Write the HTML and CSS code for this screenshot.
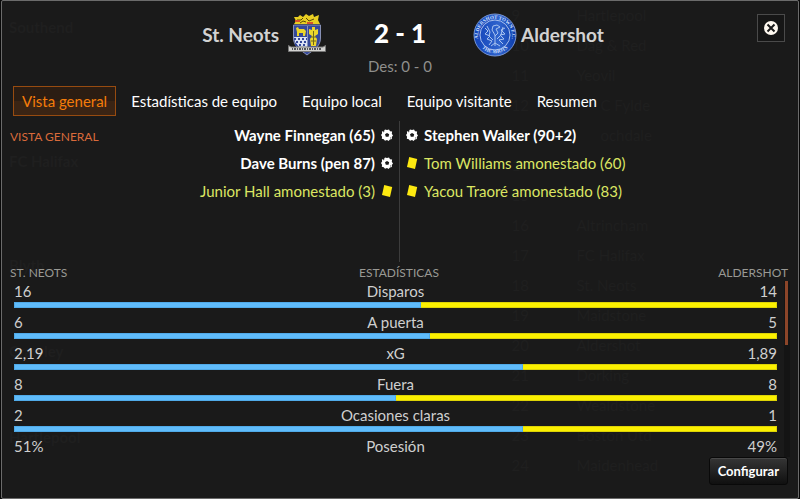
FILE: index.html
```html
<!DOCTYPE html>
<html lang="es">
<head>
<meta charset="utf-8">
<meta name="viewport" content="width=device-width, initial-scale=1">
<title>St. Neots 2 - 1 Aldershot</title>
<link rel="stylesheet" href="styles.css">
</head>
<body>
<svg class="defs" aria-hidden="true">
  <symbol id="ball" viewBox="0 0 12 12">
    <path fill="#fff" d="M4 .4 6 1 8 .4l1 1.8 2.100.4-.3 2.200L12 6.400l-1.200 1.700.2 2-2.100.3L7.600 12 6 11l-2 .8-1.200-1.600-2-.4.3-2.100L0 6l1.100-1.600-.2-2 2.100-.3z"/>
    <path fill="#1a1a1a" d="M6 4 8.200 5.300 7.500 7.700H4.800L4 5.300zM2 2.200h1.600l-1.200 1.200zM9 9.300l1.400.2-.8-1.200z"/>
  </symbol>
  <symbol id="card" viewBox="0 0 12 12">
    <path fill="#fde910" d="M3.200 0 11.200 2 9 12 1 10z"/>
  </symbol>
</svg>

<main class="panel">
  <div class="backdrop" aria-hidden="true">
    <div class="ghost-names">
      <b>Southend</b><b>FC Halifax</b><b>Blyth</b><b>Crawley</b><b>Hartlepool</b>
    </div>
    <div class="ghost-table">
      <span>9</span><span>Hartlepool</span>
      <span>10</span><span>Dag &amp; Red</span>
      <span>11</span><span>Yeovil</span>
      <span>12</span><span class="indent">C Fylde</span>
      <span>13</span><span class="indent">ochdale</span>
      <span>14</span><span></span>
      <span>15</span><span></span>
      <span>16</span><span>Altrincham</span>
      <span>17</span><span>FC Halifax</span>
      <span>18</span><span>St. Neots</span>
      <span>19</span><span>Maidstone</span>
      <span>20</span><span>Aldershot</span>
      <span>21</span><span>Dorking</span>
      <span>22</span><span>Wealdstone</span>
      <span>23</span><span>Boston Utd</span>
      <span>24</span><span>Maidenhead</span>
    </div>
  </div>

  <header class="scoreboard">
    <div class="team home">
      <h2>St. Neots</h2>
      <svg class="crest" viewBox="0 0 44 44" role="img" aria-label="Escudo de St. Neots">
        <path fill="#e9cf22" d="M9 4 13 4 15 2 18 4 21 1 24 3 28 1 29 4 34 2 33 7 35 11H9L11 8z"/>
        <path fill="none" stroke="#57480a" d="M12 7h4l2-2M21 5l3 3 5-2M15 10l3-2 3 1"/>
        <path fill="none" stroke="#d5522b" stroke-width="2" d="M10 8h5M22 10h6"/>
        <path fill="#35489a" stroke="#8790b5" d="M8.500 12H35.500V25C35.500 34 28 37 22 42 16 37 8.500 34 8.500 25z"/>
        <path fill="#dce2f4" d="M9 24h13v15l-8-5-4-5z"/>
        <path fill="none" stroke="#35489a" stroke-width="2" stroke-dasharray="2 2" d="M9 26h13M11 29h11M10 32h12M14 35h8"/>
        <path fill="#edd62b" d="M11 15l2-1 1 2h5l2 2-1 5h-2v-3h-4v3h-2v-4z"/>
        <path fill="#edd62b" d="M27 14h3v3l3-1v5l-3 2 2 3-1 7h-5l-1-7 2-3-3-2v-5l3 1z"/>
        <path stroke="#6d671c" d="M28.500 18v14M26 24h5M26 28h5"/>
        <path stroke="#8791bd" d="M22.500 13v25"/>
        <path fill="#d2d2d0" stroke="#777" d="M3.500 32.500 6 34H38L40.500 32.500V38.500H3.500z"/>
        <path stroke="#55565b" stroke-width="2" stroke-dasharray="1 1 2 1" d="M7 36h30"/>
      </svg>
    </div>
    <div class="result">
      <strong>2 - 1</strong>
      <span>Des: 0 - 0</span>
    </div>
    <div class="team away">
      <svg class="crest" viewBox="0 0 44 44" role="img" aria-label="Escudo de Aldershot">
        <defs>
          <linearGradient id="blue"><stop stop-color="#1142b8"/><stop offset=".6" stop-color="#3064cd"/><stop offset="1" stop-color="#0b3baa"/></linearGradient>
          <path id="arc-top" d="M5.500 27A17 17 0 1 1 38.500 27"/>
          <path id="arc-low" d="M6 31A18.500 18.500 0 0 0 38 31"/>
        </defs>
        <circle cx="22" cy="22" r="21" fill="url(#blue)" stroke="#7795d2"/>
        <circle cx="22" cy="22" r="15" fill="none" stroke="#a9c0ed"/>
        <text class="crest-text"><textPath href="#arc-top" startOffset="50%">ALDERSHOT TOWN F.C.</textPath></text>
        <text class="crest-text"><textPath href="#arc-low" startOffset="50%">THE SHOTS</textPath></text>
        <path fill="none" stroke="#a9c3ef" d="M22 33V22l-3-5 1-4 4-1 3 2-4 2 2 4-3 3M12 15l3 3-3 3 5 2-3 3 5 2-3 4M32 15l-4 2 4 4-5 1 4 4-5 1 4 4M14 13l3 6-1 4 4 4M30 14l-2 8-4 4M18 33l4-3 5 3"/>
      </svg>
      <h2>Aldershot</h2>
    </div>
    <button class="close" type="button" aria-label="Cerrar">
      <svg viewBox="0 0 14 14"><circle cx="7" cy="7" r="7" fill="#fff9f0"/><path d="M3.500 3.500l7 7M10.500 3.500l-7 7" stroke="#1a1a1a" stroke-width="2"/></svg>
    </button>
  </header>

  <nav class="tabs">
    <button class="tab active" type="button">Vista general</button>
    <button class="tab" type="button">Estadísticas de equipo</button>
    <button class="tab" type="button">Equipo local</button>
    <button class="tab" type="button">Equipo visitante</button>
    <button class="tab" type="button">Resumen</button>
  </nav>

  <section class="events">
    <h3>Vista general</h3>
    <ul class="home-events">
      <li class="goal">Wayne Finnegan (65)<svg><use href="#ball"/></svg></li>
      <li class="goal">Dave Burns (pen 87)<svg><use href="#ball"/></svg></li>
      <li class="booking">Junior Hall amonestado (3)<svg><use href="#card"/></svg></li>
    </ul>
    <ul class="away-events">
      <li class="goal"><svg><use href="#ball"/></svg>Stephen Walker (90+2)</li>
      <li class="booking"><svg><use href="#card"/></svg>Tom Williams amonestado (60)</li>
      <li class="booking"><svg><use href="#card"/></svg>Yacou Traoré amonestado (83)</li>
    </ul>
  </section>

  <section class="stats">
    <div class="stats-head"><span>St. Neots</span><h3>Estadísticas</h3><span>Aldershot</span></div>
    <div class="stats-body">
      <div class="rows">
        <div class="row"><span>16</span><span>Disparos</span><span>14</span></div>
        <div class="bar"><i style="width:53.3%"></i></div>
        <div class="row"><span>6</span><span>A puerta</span><span>5</span></div>
        <div class="bar"><i style="width:54.5%"></i></div>
        <div class="row"><span>2,19</span><span>xG</span><span>1,89</span></div>
        <div class="bar"><i style="width:66.7%"></i></div>
        <div class="row"><span>8</span><span>Fuera</span><span>8</span></div>
        <div class="bar"><i style="width:50%"></i></div>
        <div class="row"><span>2</span><span>Ocasiones claras</span><span>1</span></div>
        <div class="bar"><i style="width:66.7%"></i></div>
        <div class="row"><span>51%</span><span>Posesión</span><span>49%</span></div>
      </div>
      <div class="scroll"><div class="thumb"></div></div>
    </div>
  </section>

  <footer><button class="configure" type="button">Configurar</button></footer>
</main>
</body>
</html>
```
FILE: styles.css
```css
* { box-sizing: border-box; }
body {
  margin: 0;
  padding: 0 1px 1px;
  min-height: 100vh;
  display: flex;
  background: #080808;
  color: #fff;
  font: 15px/20px Lato, "Open Sans", sans-serif;
}
h2, h3, ul { margin: 0; padding: 0; }
ul { list-style: none; }
button { font: inherit; color: inherit; cursor: pointer; }
.defs { position: absolute; width: 0; height: 0; }

.panel {
  position: relative;
  flex: 1;
  display: flex;
  flex-direction: column;
  border: 1px solid #6b6b6b;
  border-radius: 2px;
  background: #1a1a1a;
}
.panel > * { position: relative; }
.panel > .backdrop {
  position: absolute;
  inset: 0;
  display: flex;
  justify-content: space-between;
  overflow: hidden;
  color: #1f1f1f;
}
.ghost-names {
  display: grid;
  grid-template-rows: 134px 104px 86px 86px 30px;
  padding: 16px 0 0 7px;
}
.ghost-table {
  display: grid;
  grid-template-columns: 65px 1fr;
  grid-auto-rows: 30px;
  align-content: start;
  width: 36%;
  line-height: 28px;
}
.indent { padding-left: 24px; }

.scoreboard {
  display: grid;
  grid-template-columns: 1fr 142px 1fr;
  align-items: start;
  height: 85px;
}
.team { display: flex; align-items: center; padding-top: 12px; color: #d2d2d2; }
.team h2 { font-size: 19px; line-height: 44px; }
.home { justify-content: flex-end; gap: 6px; }
.away { gap: 4px; padding-left: 2px; }
.crest { width: 44px; height: 44px; }
.crest-text {
  fill: #d3e0ff;
  font: bold 5px "Liberation Serif", serif;
  text-anchor: middle;
}
.result { text-align: center; padding-top: 16px; }
.result strong { display: block; font-size: 26px; line-height: 32px; font-weight: 900; }
.result span { display: block; line-height: 34px; color: #8f8f8c; }
.close {
  position: absolute;
  top: 13px;
  right: 13px;
  width: 28px;
  height: 28px;
  display: grid;
  place-items: center;
  padding: 0;
  border: 1px solid #4a4a4a;
  background: #161616;
}
.close svg { width: 14px; height: 14px; }

.tabs { display: flex; gap: 5px; padding: 0 11px; }
.tab { height: 30px; padding: 0 8px; border: 1px solid transparent; background: none; }
.tab:not(.active) { padding: 0 9px; }
.tab.active { color: #f57c0a; border-color: #974b10; background: linear-gradient(#2b1d13 50%, #3a2414 50%); }

h3 { font-size: 12px; line-height: 16px; font-weight: 400; text-transform: uppercase; }
.events {
  display: grid;
  grid-template-columns: 1fr 2fr 3fr;
  margin-top: 5px;
  height: 141px;
}
.events h3 { padding: 8px 0 0 8px; color: #d96a3b; white-space: nowrap; }
.events li { display: flex; align-items: center; gap: 6px; height: 28px; white-space: nowrap; }
.events svg { width: 12px; height: 12px; flex: none; }
.home-events { border-right: 1px solid #3c3c3c; padding-right: 6px; }
.home-events li { justify-content: flex-end; }
.away-events { padding-left: 6px; }
.goal { font-weight: 700; }
.booking { color: #dce663; }

.stats-head, .row { display: grid; grid-template-columns: 1fr auto 1fr; }
.stats-head > :last-child, .row > :last-child { text-align: right; }
.stats-head {
  padding: 3px 10px 0 8px;
  color: #999994;
  font-size: 12px;
  line-height: 16px;
  text-transform: uppercase;
}
.stats-body { display: flex; gap: 7px; padding: 0 8px 0 12px; }
.rows { flex: 1; color: #cfcfcf; }
.row { line-height: 20px; height: 21px; }
.bar { height: 6px; margin-bottom: 4px; background: #fbf000; box-shadow: inset 0 0 0 1px #ddd306; }
.bar i { display: block; height: 6px; background: #5fbcfb; box-shadow: inset 0 0 0 1px #50aae8; }
.scroll { width: 6px; background: #141414; }
.thumb { width: 3px; height: 64px; margin-left: 1px; background: #8c4529; }

footer { display: flex; justify-content: flex-end; padding: 0 10px 13px; }
.configure {
  height: 28px;
  padding: 0 8px;
  border: 1px solid #090909;
  border-radius: 3px;
  background: linear-gradient(#353535, #101010);
  box-shadow: inset 0 1px #484848;
  font-size: 13px;
  font-weight: 700;
}
```
